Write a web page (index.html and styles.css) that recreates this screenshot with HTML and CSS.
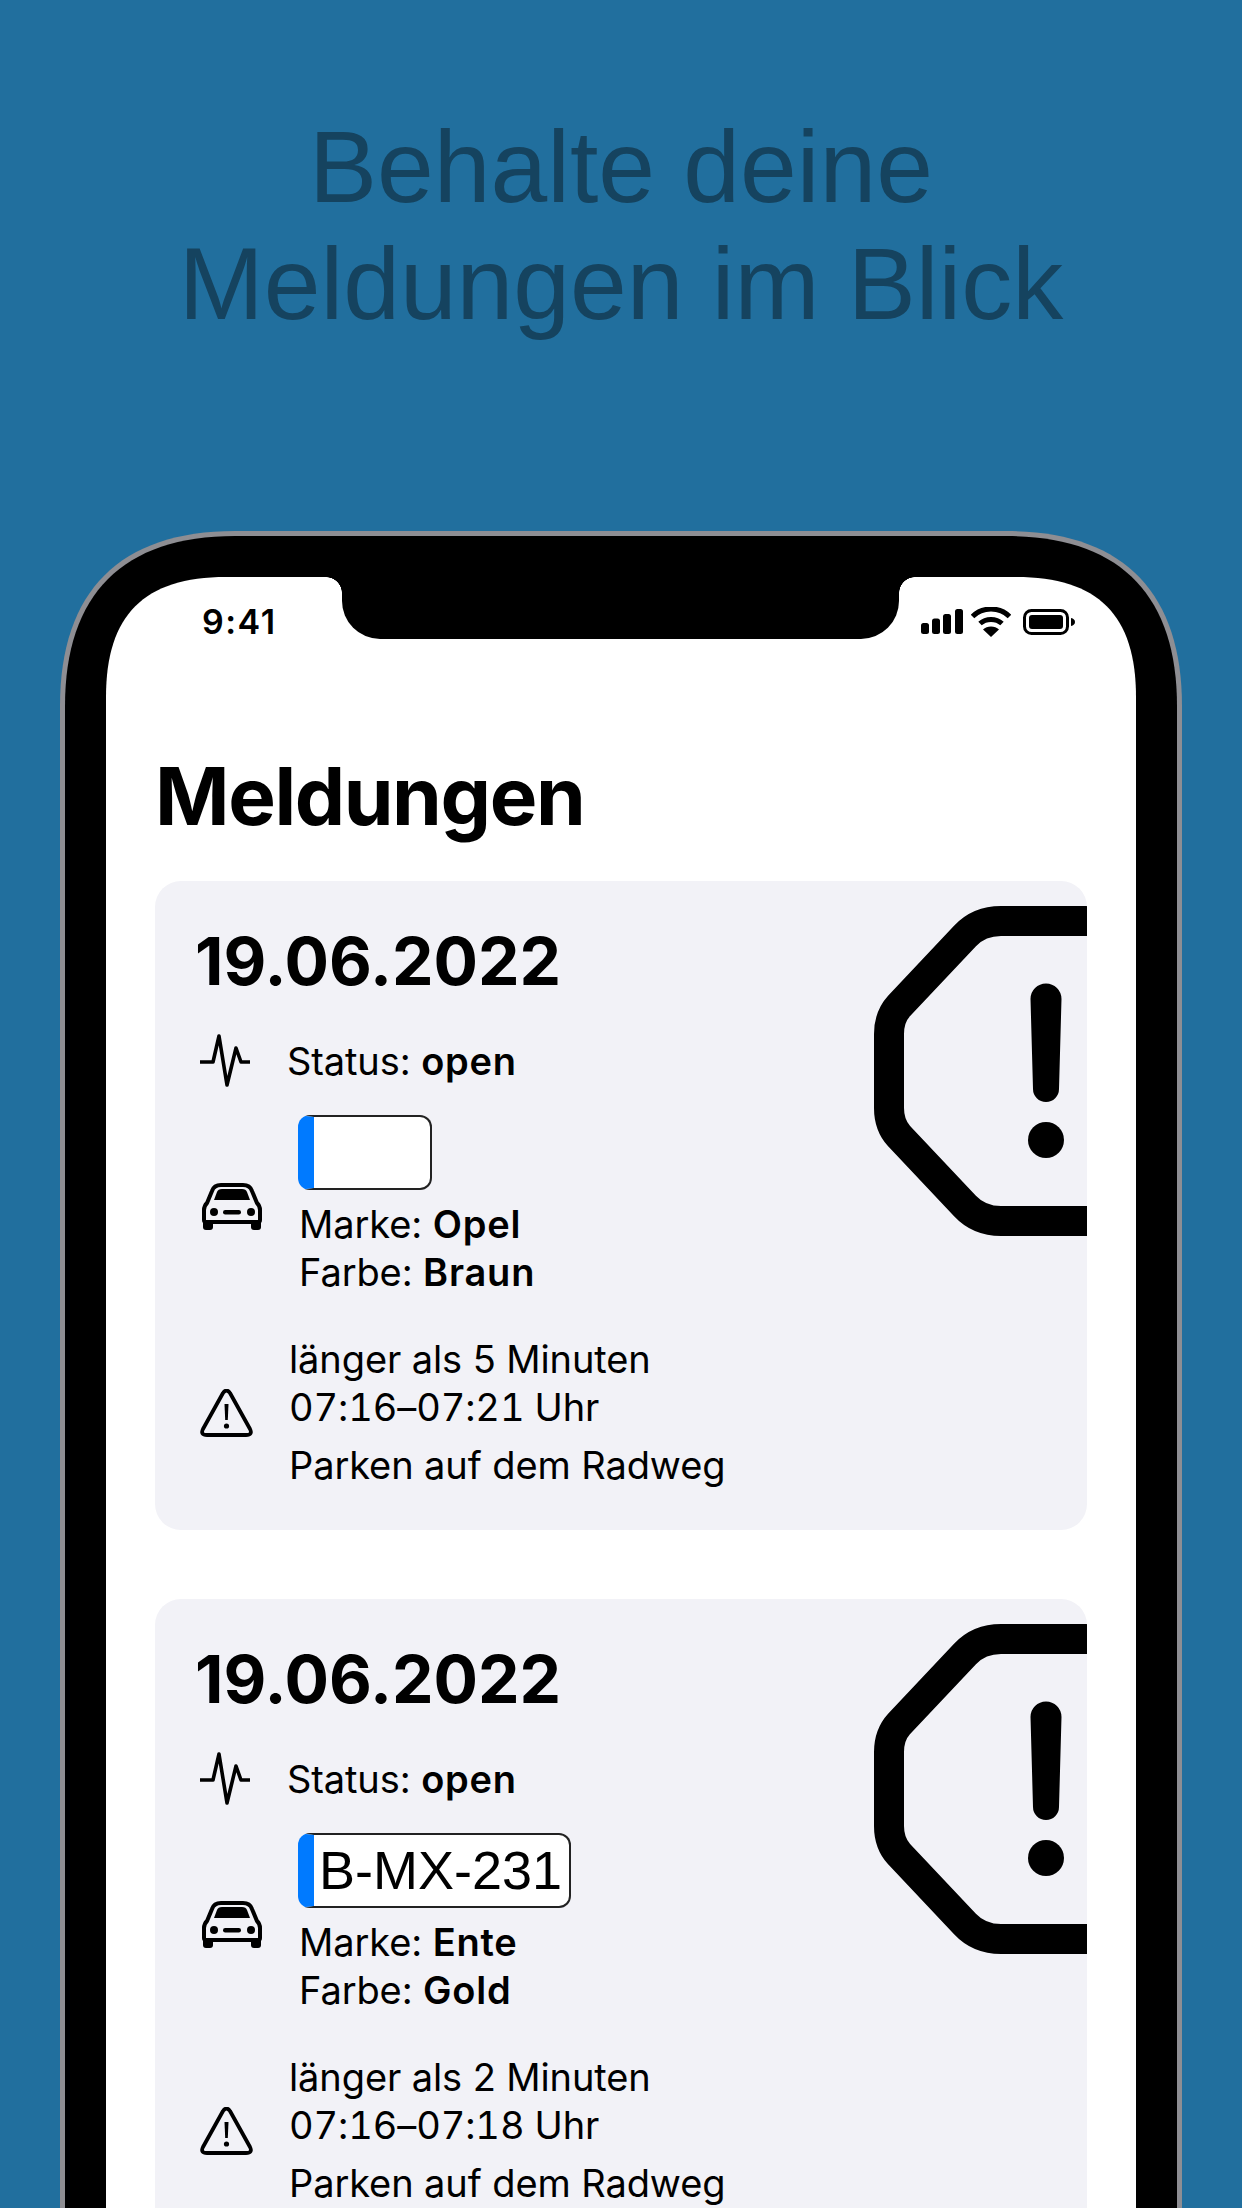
FILE: index.html
```html
<!DOCTYPE html>
<html lang="de">
<head>
  <meta charset="UTF-8" />
  <meta name="viewport" content="width=device-width, initial-scale=1.0"/>
  <title>Meldungen</title>
  <link rel="stylesheet" href="styles.css">
</head>
<body>

  <div class="page">
    <h1 class="headline">Behalte deine<br>Meldungen im Blick</h1>

    <div class="phone">
      <div class="phone-body">
        <div class="screen">
          <div class="notch"></div>

          <div class="statusbar">
            <span class="clock">9:41</span>
            <div class="status-icons">
              <svg width="42" height="25" viewBox="0 0 42 25">
                <rect x="0" y="14" width="8" height="11" rx="2.5"/>
                <rect x="11" y="9.500" width="8" height="15.500" rx="2.500"/>
                <rect x="22" y="5" width="8" height="20" rx="2.500"/>
                <rect x="34" y="0" width="8" height="25" rx="2.500"/>
              </svg>
              <svg width="40" height="30" viewBox="0 0 40 30">
                <path d="M1.500 9.500C11.500 -0.500 28.500 -0.500 38.500 9.500" class="wave"/>
                <path d="M9 16.500C15 11 25 11 31 16.500" class="wave"/>
                <path d="M20 30L12 22.500C16 18.500 24 18.500 28 22.500Z"/>
              </svg>
              <svg class="battery" width="52" height="26" viewBox="0 0 52 26">
                <rect x="1.500" y="1.500" width="43" height="23" rx="7" class="batt"/>
                <rect x="6" y="6" width="34" height="14" rx="3"/>
                <path d="M48 9C50.500 9.500 52 11 52 13C52 15 50.500 16.500 48 17Z"/>
              </svg>
            </div>
          </div>

          <h2 class="title">Meldungen</h2>

          <div class="card">
            <svg class="big-icon" width="213" height="330" viewBox="0 0 213 330">
              <path class="big-outline" d="M213 15H127Q105 15 91 30L25 100Q15 111 15 128V202Q15 219 25 230L91 300Q105 315 127 315H213"/>
              <path d="M156.500 93a15.500 15.500 0 0 1 31 0L185 183a13 13 0 0 1 -26 0Z"/>
              <circle cx="172" cy="234" r="18"/>
            </svg>
            <div class="date">19.06.2022</div>
            <div class="row row-status">
              <svg class="icon-pulse" width="50" height="53" viewBox="0 0 50 53">
                <path d="M0 28H13L19 2L27 51L36 14L41 28H50"/>
              </svg>
              <div class="line">Status: <b>open</b></div>
            </div>
            <div class="row row-car">
              <svg class="icon-car" width="60" height="48" viewBox="0 0 60 48">
                <use href="#car"/>
              </svg>
              <div>
                <div class="plate"><span class="plate-text"></span></div>
                <div class="car-info">
                  <div class="line">Marke: <b>Opel</b></div>
                  <div class="line">Farbe: <b>Braun</b></div>
                </div>
              </div>
            </div>
            <div class="row row-warn">
              <svg class="icon-warn" width="53" height="49" viewBox="0 0 53 49">
                <use href="#warn"/>
              </svg>
              <div>
                <div class="line">länger als 5 Minuten</div>
                <div class="line time">07:16–07:21 Uhr</div>
                <div class="line reason">Parken auf dem Radweg</div>
              </div>
            </div>
          </div>

          <div class="card">
            <svg class="big-icon" width="213" height="330" viewBox="0 0 213 330">
              <path class="big-outline" d="M213 15H127Q105 15 91 30L25 100Q15 111 15 128V202Q15 219 25 230L91 300Q105 315 127 315H213"/>
              <path d="M156.500 93a15.500 15.500 0 0 1 31 0L185 183a13 13 0 0 1 -26 0Z"/>
              <circle cx="172" cy="234" r="18"/>
            </svg>
            <div class="date">19.06.2022</div>
            <div class="row row-status">
              <svg class="icon-pulse" width="50" height="53" viewBox="0 0 50 53">
                <path d="M0 28H13L19 2L27 51L36 14L41 28H50"/>
              </svg>
              <div class="line">Status: <b>open</b></div>
            </div>
            <div class="row row-car">
              <svg class="icon-car" width="60" height="48" viewBox="0 0 60 48">
                <use href="#car"/>
              </svg>
              <div>
                <div class="plate"><span class="plate-text">B-MX-231</span></div>
                <div class="car-info">
                  <div class="line">Marke: <b>Ente</b></div>
                  <div class="line">Farbe: <b>Gold</b></div>
                </div>
              </div>
            </div>
            <div class="row row-warn">
              <svg class="icon-warn" width="53" height="49" viewBox="0 0 53 49">
                <use href="#warn"/>
              </svg>
              <div>
                <div class="line">länger als 2 Minuten</div>
                <div class="line time">07:16–07:18 Uhr</div>
                <div class="line reason">Parken auf dem Radweg</div>
              </div>
            </div>
          </div>
        </div>
      </div>
    </div>
  </div>

  <svg class="defs" width="0" height="0">
    <symbol id="car" viewBox="0 0 60 48">
      <path d="M2 37V27Q2 23 5 20L10 8Q12 2 19 2H41Q48 2 50 8L55 20Q58 23 58 27V37Q58 39 56 39H4Q2 39 2 37Z" fill="none" stroke="#000" stroke-width="4"/>
      <path d="M12 17L15 9Q16 6 20 6H40Q44 6 45 9L48 17Z"/>
      <circle cx="12" cy="29" r="4"/>
      <circle cx="49" cy="29" r="4"/>
      <rect x="21" y="27" width="18" height="4.500" rx="2.200"/>
      <path d="M1 38H11V44Q11 47 8 47H4Q1 47 1 44Z"/>
      <path d="M49 38H59V44Q59 47 56 47H52Q49 47 49 44Z"/>
    </symbol>
    <symbol id="warn" viewBox="0 0 53 49">
      <path d="M23 4L3 40Q0 46 7 46H46Q53 46 50 40L30 4Q26.500 -1 23 4Z" fill="none" stroke="#000" stroke-width="3.800" stroke-linejoin="round"/>
      <path d="M24.500 15H28.500L27.800 31H25.200Z"/>
      <circle cx="26.500" cy="37" r="2.600"/>
    </symbol>
  </svg>

</body>
</html>
```

FILE: styles.css
```css
* {
  box-sizing: border-box;
}
html, body {
  margin: 0;
  height: 2208px;
  overflow: hidden;
}
body {
  background-color: #216f9e;
  font-family: 'Inter', 'Noto Sans', sans-serif;
  color: #000;
}
.defs {
  position: absolute;
}
.page {
  height: 2208px;
  overflow: hidden;
  padding-top: 109px;
}
.headline {
  margin: 0;
  height: 422px;
  font-family: 'Liberation Sans', Arial, sans-serif;
  font-weight: 400;
  font-size: 102px;
  line-height: 117px;
  text-align: center;
  color: #15435f;
}

/* phone: the corners are squircles, so clip-path instead of border-radius */
.phone {
  width: 1122px;
  height: 1800px;
  margin-left: 60px;
  padding: 5px 5px 0;
  background-color: #8e8e93;
  clip-path: path("M0 175C0 60 60 0 175 0H947C1062 0 1122 60 1122 175V1800H0Z");
}
.phone-body {
  height: 1795px;
  padding: 41px 41px 0;
  background-color: #000;
  clip-path: path("M0 170C0 58 58 0 170 0H942C1054 0 1112 58 1112 170V1795H0Z");
}
.screen {
  position: relative;
  height: 1754px;
  padding: 0 49px;
  background-color: #fff;
  clip-path: path("M0 120C0 38 38 0 120 0H910C992 0 1030 38 1030 120V1754H0Z");
}
.notch {
  position: absolute;
  top: 0;
  left: 236px;
  width: 557px;
  height: 62px;
  background-color: #000;
  border-radius: 0 0 38px 38px;
}
.notch::before, .notch::after {
  content: "";
  position: absolute;
  top: 0;
  width: 16px;
  height: 16px;
}
.notch::before {
  left: -16px;
  background: radial-gradient(circle at 0 100%, #fff 15.500px, #000 16px);
}
.notch::after {
  right: -16px;
  background: radial-gradient(circle at 100% 100%, #fff 15.500px, #000 16px);
}
.statusbar {
  display: flex;
  justify-content: space-between;
  align-items: center;
  height: 60px;
  padding: 29px 12px 0 47px;
}
.clock {
  font-size: 34px;
  font-weight: 600;
  letter-spacing: 1.500px;
}
.status-icons {
  display: flex;
  align-items: center;
  gap: 8px;
}
.battery {
  margin-left: 4px;
}
.wave {
  fill: none;
  stroke: #000;
  stroke-width: 5;
}
.batt {
  fill: none;
  stroke: #000;
  stroke-width: 3;
}
.title {
  margin: 110px 0 37px;
  font-size: 80px;
  line-height: 97px;
  font-weight: 700;
  letter-spacing: -1.400px;
}

/* cards */
.card {
  position: relative;
  height: 649px;
  margin-bottom: 69px;
  padding: 40px 40px 0;
  background-color: #f2f2f7;
  border-radius: 26px;
  overflow: hidden;
}
.big-icon {
  position: absolute;
  top: 25px;
  right: 0;
}
.big-outline {
  fill: none;
  stroke: #000;
  stroke-width: 30;
}
.date {
  font-size: 66px;
  line-height: 80px;
  font-weight: 700;
}
.row {
  display: flex;
  align-items: center;
  padding-left: 5px;
}
.row-status {
  height: 53px;
  margin-top: 33px;
  gap: 37px;
}
.icon-pulse path {
  fill: none;
  stroke: #000;
  stroke-width: 3.600;
  stroke-linejoin: round;
  stroke-linecap: round;
}
.line {
  font-size: 38px;
  line-height: 48px;
  letter-spacing: -0.100px;
}
.line b {
  font-weight: 600;
  letter-spacing: 0.800px;
}
.time {
  font-variant-numeric: tabular-nums;
}
.row-car {
  margin-top: 28px;
  gap: 36px;
  padding-left: 7px;
}
.icon-car {
  margin-top: 2px;
}
.plate {
  width: fit-content;
  min-width: 134px;
  height: 75px;
  border: 2px solid #222;
  border-left-width: 16px;
  border-left-color: #007aff;
  border-radius: 12px;
  background-color: #fff;
  padding: 0 7px 0 5px;
}
.plate-text {
  font-family: 'Liberation Sans', Arial, sans-serif;
  font-size: 54px;
  line-height: 71px;
}
.car-info {
  padding-left: 1px;
  margin-top: 10px;
}
.row-warn {
  margin-top: 39px;
  gap: 36px;
}
.icon-warn {
  margin-top: 2px;
}
.reason {
  margin-top: 10px;
}
```
